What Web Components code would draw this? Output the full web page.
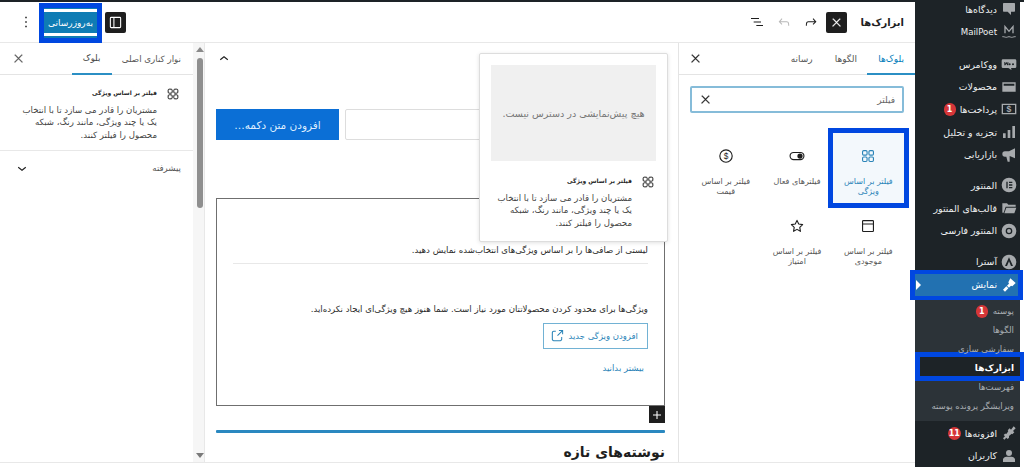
<!DOCTYPE html>
<html lang="fa" dir="rtl">
<head>
<meta charset="utf-8">
<title>ابزارک‌ها</title>
<style>
html, body { margin: 0; height: 100%; overflow: hidden; background: #fff; }
body { font-family: "DejaVu Sans", "Noto Sans", sans-serif; color: #1e1e1e; }
</style>
</head>
<body>
<wp-app>
  <wp-admin-menu slot="menu">
    <wp-menu-item icon="comment" style="--h:14px">دیدگاه‌ها</wp-menu-item>
    <wp-menu-item icon="mailpoet" style="--gap:5px;font-size:8.6px">MailPoet</wp-menu-item>
    <wp-menu-item icon="woo" style="--gap:9px">ووکامرس</wp-menu-item>
    <wp-menu-item icon="box">محصولات</wp-menu-item>
    <wp-menu-item icon="pay" badge="1">پرداخت‌ها</wp-menu-item>
    <wp-menu-item icon="bars">تجزیه و تحلیل</wp-menu-item>
    <wp-menu-item icon="mega">بازاریابی</wp-menu-item>
    <wp-menu-item icon="elementor" style="--gap:8px">المنتور</wp-menu-item>
    <wp-menu-item icon="folder">قالب‌های المنتور</wp-menu-item>
    <wp-menu-item icon="disc">المنتور فارسی</wp-menu-item>
    <wp-menu-item icon="astra" style="--gap:8px">آسترا</wp-menu-item>
    <wp-menu-item icon="brush" current>نمایش</wp-menu-item>
    <wp-submenu>
      <wp-submenu-item badge="1">پوسته</wp-submenu-item>
      <wp-submenu-item>الگوها</wp-submenu-item>
      <wp-submenu-item>سفارشی سازی</wp-submenu-item>
      <wp-submenu-item current>ابزارک‌ها</wp-submenu-item>
      <wp-submenu-item>فهرست‌ها</wp-submenu-item>
      <wp-submenu-item>ویرایشگر پرونده پوسته</wp-submenu-item>
    </wp-submenu>
    <wp-menu-item icon="plug" badge="11" style="--gap:1px">افزونه‌ها</wp-menu-item>
    <wp-menu-item icon="user">کاربران</wp-menu-item>
  </wp-admin-menu>

  <wp-editor-header slot="header">ابزارک‌ها</wp-editor-header>

  <wp-inserter slot="inserter">
    <wp-block-tile icon="grid" selected>فیلتر بر اساس ویژگی</wp-block-tile>
    <wp-block-tile icon="toggle">فیلترهای فعال</wp-block-tile>
    <wp-block-tile icon="dollar">فیلتر بر اساس قیمت</wp-block-tile>
    <wp-block-tile icon="archive">فیلتر بر اساس موجودی</wp-block-tile>
    <wp-block-tile icon="star">فیلتر بر اساس امتیاز</wp-block-tile>
  </wp-inserter>

  <wp-canvas slot="canvas"></wp-canvas>

  <wp-scrollbar slot="scrollbar"></wp-scrollbar>

  <wp-settings slot="settings"></wp-settings>
</wp-app>

<script>
const ICONS = {
  close: `<path fill="currentColor" stroke="currentColor" stroke-width=".8" d="M13 11.8l6.1-6.3-1-1-6.1 6.2-6.1-6.2-1 1 6.1 6.3-6.5 6.7 1 1 6.5-6.6 6.5 6.6 1-1z"/>`,
  redo: `<path fill="currentColor" d="M15.6 6.5l-1.1 1 2.9 3.3H8c-.9 0-1.7.3-2.3.9-1.4 1.5-1.4 4.2-1.4 5.6v.2h1.5v-.3c0-1.1 0-3.5 1-4.5.3-.3.7-.5 1.3-.5h9.2L14.5 15l1.1 1.1 4.6-4.6-4.6-5z"/>`,
  undo: `<path fill="currentColor" d="M18.3 11.7c-.6-.6-1.4-.9-2.3-.9H6.7l2.9-3.3-1.1-1-4.5 5L8.5 16l1-1-2.7-2.7H16c.5 0 .9.2 1.3.5 1 1 1 3.4 1 4.5v.3h1.5v-.2c0-1.5 0-4.3-1.5-5.7z"/>`,
  list: `<path fill="currentColor" d="M3 6h12v1.5H3zM7 11.25h11v1.5H7zM11 16.5h10V18H11z"/>`,
  panel: `<path fill="currentColor" d="M18 4H6a2 2 0 0 0-2 2v12a2 2 0 0 0 2 2h12a2 2 0 0 0 2-2V6a2 2 0 0 0-2-2zM5.5 18V6c0-.3.2-.5.5-.5h3v13H6a.5.5 0 0 1-.5-.5zm13 0c0 .3-.2.5-.5.5h-7.500v-13H18c.3 0 .5.2.5.5z"/>`,
  kebab: `<path fill="currentColor" d="M13 19h-2v-2h2zm0-6h-2v-2h2zm0-6h-2V5h2z"/>`,
  up: `<path fill="currentColor" d="M6.500 12.400L12 8l5.500 4.400-.9 1.200L12 10l-4.500 3.600-1-1.200z"/>`,
  down: `<path fill="currentColor" d="M17.500 11.600L12 16l-5.500-4.400.9-1.200L12 14l4.500-3.600 1 1.200z"/>`,
  plus: `<path fill="currentColor" d="M18 11.200h-5.200V6h-1.600v5.200H6v1.600h5.200V18h1.600v-5.200H18z"/>`,
  grid: `<g fill="none" stroke="currentColor" stroke-width="1.500"><rect x="4.750" y="4.750" width="6" height="6" rx="1.500"/><rect x="13.250" y="4.750" width="6" height="6" rx="1.500"/><rect x="4.750" y="13.250" width="6" height="6" rx="1.500"/><rect x="13.250" y="13.250" width="6" height="6" rx="1.500"/></g>`,
  toggle: `<rect x="2.750" y="7.250" width="18.500" height="9.500" rx="4.750" fill="none" stroke="currentColor" stroke-width="1.500"/><circle cx="16" cy="12" r="3.500" fill="currentColor"/>`,
  dollar: `<circle cx="12" cy="12" r="8.250" fill="none" stroke="currentColor" stroke-width="1.500"/><text x="12" y="16" text-anchor="middle" font-size="11" font-family="Liberation Sans" fill="currentColor" direction="ltr">$</text>`,
  archive: `<path fill="none" stroke="currentColor" stroke-width="1.500" d="M5.750 4.750h12.500c.6 0 1 .4 1 1v12.500c0 .6-.4 1-1 1H5.750c-.6 0-1-.4-1-1V5.750c0-.6.4-1 1-1zM4.750 9.250h14.500"/>`,
  star: `<path fill="none" stroke="currentColor" stroke-width="1.500" stroke-linejoin="round" d="M12 4.500l2.300 4.900 5.200.7-3.800 3.700.9 5.300-4.600-2.600-4.600 2.600.9-5.300-3.800-3.700 5.200-.7z"/>`,
  external: `<path fill="currentColor" d="M18.200 17c0 .7-.6 1.200-1.200 1.200H7c-.7 0-1.200-.6-1.200-1.200V7c0-.7.6-1.200 1.200-1.200h3.200V4.200H7C5.500 4.200 4.200 5.500 4.200 7v10c0 1.500 1.200 2.800 2.800 2.800h10c1.500 0 2.800-1.200 2.800-2.800v-3.600h-1.500V17zM14.900 3v1.500h3.700l-6.400 6.400 1.100 1.100 6.400-6.400v3.700h1.500V3h-6.300z"/>`,
  comment: `<path fill="currentColor" d="M4 3h16a1 1 0 0 1 1 1v11a1 1 0 0 1-1 1h-5v5l-5-5H4a1 1 0 0 1-1-1V4a1 1 0 0 1 1-1z"/>`,
  mailpoet: `<path fill="none" stroke="currentColor" stroke-width="2" d="M6 14V4l6 7 6-7v10"/><path fill="none" stroke="currentColor" stroke-width="1.500" d="M2 19c4 0 4 1 6 1 1.500 0 2.500-1 4-1s2.500 1 4 1c2 0 2-1 6-1"/>`,
  woo: `<path fill="currentColor" fill-rule="evenodd" d="M3 5h18a2 2 0 0 1 2 2v9a2 2 0 0 1-2 2h-6l1 3-5-3H3a2 2 0 0 1-2-2V7a2 2 0 0 1 2-2zm2 4v5h1.500L8 11.500 9.500 14H11V9H9.800v2.500L8.500 9.500h-1L6.200 11.500V9zm8 2a1.500 1.500 0 1 0 0 3 1.500 1.500 0 0 0 0-3zm5 0a1.500 1.500 0 1 0 0 3 1.500 1.500 0 0 0 0-3z"/>`,
  box: `<path fill="currentColor" d="M2 5h20v14H2zM4 7v3h16V7z" fill-rule="evenodd"/>`,
  pay: `<path fill="none" stroke="currentColor" stroke-width="2" d="M2 5h20v14H2z"/><text x="12" y="17" text-anchor="middle" font-size="13" font-weight="700" font-family="Liberation Sans" fill="currentColor" direction="ltr">$</text>`,
  bars: `<path fill="currentColor" d="M3 14h4v7H3zM10 9h4v12h-4zM17 3h4v18h-4z"/>`,
  mega: `<path fill="currentColor" d="M21 2v15l-8-3.500V22h-3l-2-7.500H6a4 4 0 0 1 0-8h6z"/>`,
  elementor: `<path fill="currentColor" fill-rule="evenodd" d="M12 1a11 11 0 1 1 0 22 11 11 0 0 1 0-22zM8 7v10h2V7zm4 0v2h5V7zm0 4v2h5v-2zm0 4v2h5v-2z"/>`,
  folder: `<path fill="currentColor" d="M2 5h7l2 2h11v3H7l-3 9H2zM8 11.500h15L20 20H5z"/>`,
  disc: `<path fill="currentColor" fill-rule="evenodd" d="M12 1a11 11 0 1 1 0 22 11 11 0 0 1 0-22zm0 6a5 5 0 1 0 0 10 5 5 0 0 0 0-10z"/><circle cx="12" cy="12" r="3" fill="currentColor"/>`,
  astra: `<path fill="currentColor" fill-rule="evenodd" d="M12 1a11 11 0 1 1 0 22 11 11 0 0 1 0-22zm0 4L6 18h3l3-7 3 7h3z"/>`,
  brush: `<path fill="currentColor" d="M14 2l8 7-5 5-2-1-2 2-1 1-3-3 1-1 2-2-1-2zM8 14l3 3-5 5-3-3z"/>`,
  plug: `<path fill="currentColor" d="M19 2l3 3-4 4 2 2-3 3-1-1-4 3.500V19l-2 2-2-2-3 3-2-2 3-3-2-2 2-2h2.500L11 9l-1-1 3-3 2 2z"/>`,
  user: `<path fill="currentColor" d="M12 3a4.500 4.500 0 1 1 0 9 4.500 4.500 0 0 1 0-9zM3 21v-4c0-2 3-4 5-4h8c2 0 5 2 5 4v4z"/>`,
};

function icon(name, size = 24) {
  return `<svg aria-hidden="true" width="${size}" height="${size}" viewBox="0 0 24 24">${ICONS[name]}</svg>`;
}

class WpApp extends HTMLElement {
  constructor() {
    super();
    this.attachShadow({ mode: "open" }).innerHTML = `
<style>
:host {
  display: flex;
  block-size: 467px;
  box-sizing: border-box;
  border-top: 2px solid #1d2327;
  padding-right: 4px;
  overflow: hidden;
}
.editor { flex: 1; min-width: 0; display: flex; flex-direction: column; }
.panels { flex: 1; min-height: 0; display: flex; }
.foot { height: 4px; border-top: 1px solid #e8e8e8; background: #fff; position: relative; }
::slotted([slot="menu"]) { flex: none; width: 105px; }
</style>
<slot name="menu"></slot>
<div class="editor">
  <slot name="header"></slot>
  <div class="panels">
    <slot name="inserter"></slot>
    <slot name="canvas"></slot>
    <slot name="scrollbar"></slot>
    <slot name="settings"></slot>
  </div>
  <div class="foot"></div>
</div>`;
  }
}

class WpAdminMenu extends HTMLElement {
  constructor() {
    super();
    this.attachShadow({ mode: "open" }).innerHTML = `
<style>
:host { display: block; background: #1d2327; position: relative; z-index: 2; }
</style>
<slot></slot>`;
  }
}

function badgeHtml(el) {
  return el.hasAttribute("badge") ? `<span class="badge">${el.getAttribute("badge")}</span>` : "";
}

class WpMenuItem extends HTMLElement {
  connectedCallback() {
    if (this.shadowRoot) return;
    this.attachShadow({ mode: "open" }).innerHTML = `
<style>
:host {
  display: flex;
  align-items: center;
  height: var(--h, 22.700px);
  margin-top: var(--gap, 0);
  color: #eef0f1;
  font-size: 9.400px;
  position: relative;
  white-space: nowrap;
}
.ic { flex: none; width: 22px; display: flex; justify-content: center; color: #a7aaad; }
.lbl { padding-right: 1px; }
.badge {
  margin-right: 4px;
  min-width: 12px;
  height: 13px;
  padding: 0 1px;
  box-sizing: border-box;
  border-radius: 7px;
  background: #d63638;
  color: #fff;
  font: 700 8px/13px "DejaVu Sans", sans-serif;
  text-align: center;
}
:host([current]) { background: #2271b1; color: #fff; height: 22px; margin: 1px 0 1px; }
:host([current]) .ic { color: #fff; }
:host([current])::before {
  content: "";
  position: absolute;
  inset: -4px -3px -4px -5px;
  border: solid #0047e0;
  border-width: 4px 5px;
}
:host([current])::after {
  content: "";
  position: absolute;
  left: 1px;
  top: 6px;
  border: 5px solid transparent;
  border-left: 5px solid #fff;
}
</style>
<span class="ic">${icon(this.getAttribute("icon"), 16)}</span>
<span class="lbl"><slot></slot></span>${badgeHtml(this)}`;
  }
}

class WpSubmenu extends HTMLElement {
  constructor() {
    super();
    this.attachShadow({ mode: "open" }).innerHTML = `
<style>
:host { display: block; background: #2c3338; padding: 5px 0; }
</style>
<slot></slot>`;
  }
}

class WpSubmenuItem extends HTMLElement {
  connectedCallback() {
    if (this.shadowRoot) return;
    this.attachShadow({ mode: "open" }).innerHTML = `
<style>
:host {
  display: flex;
  align-items: center;
  height: 19px;
  padding-right: 6px;
  color: #a9aeb3;
  font-size: 8.600px;
  position: relative;
  white-space: nowrap;
}
.lbl { position: relative; z-index: 1; }
.badge {
  margin-right: 5px;
  width: 12px;
  height: 13px;
  border-radius: 7px;
  background: #d63638;
  color: #fff;
  font: 700 8px/13px "DejaVu Sans", sans-serif;
  text-align: center;
}
:host([current]) { color: #fff; font-weight: 700; font-size: 9px; }
:host([current])::before {
  content: "";
  position: absolute;
  inset: -7px -5px -3px 0;
  background: #1d2327;
  border: 5px solid #0047e0;
}
</style>
<span class="lbl"><slot></slot></span>${badgeHtml(this)}`;
  }
}

class WpEditorHeader extends HTMLElement {
  constructor() {
    super();
    this.attachShadow({ mode: "open" }).innerHTML = `
<style>
:host {
  display: flex;
  align-items: center;
  flex: none;
  height: 40px;
  border-bottom: 1px solid #e8e8e8;
  padding-right: 11px;
  position: relative;
}
.title { font-size: 10px; font-weight: 700; margin-left: 13px; }
.black {
  width: 21px;
  height: 21px;
  border-radius: 2px;
  background: #1e1e1e;
  color: #fff;
  display: flex;
  align-items: center;
  justify-content: center;
}
.tools { display: flex; align-items: center; gap: 11px; margin-right: 7px; }
.tools span { display: flex; }
.muted { color: #b8b8b8; }
.end { margin-right: auto; display: flex; align-items: center; }
.save {
  box-sizing: border-box;
  width: 63px;
  height: 40px;
  margin: 1px 3px 0 0;
  border: 5px solid #0047e0;
  background: #0f7cb4;
  display: flex;
  align-items: center;
  justify-content: center;
  color: #fff;
  font-size: 9px;
  white-space: nowrap;
  position: relative;
}
.save::before {
  content: "";
  position: absolute;
  left: 0;
  right: 0;
  top: 1px;
  height: 21px;
  border: solid #fff;
  border-width: 3px 0;
}
.kebab { display: flex; margin: 0 4px 0 17px; color: #1e1e1e; }
</style>
<span class="title"><slot></slot></span>
<span class="black">${icon("close", 13)}</span>
<span class="tools">
  <span>${icon("redo", 16)}</span>
  <span class="muted">${icon("undo", 16)}</span>
  <span>${icon("list", 16)}</span>
</span>
<span class="end">
  <span class="black">${icon("panel", 17)}</span>
  <span class="save">به‌روزرسانی</span>
  <span class="kebab">${icon("kebab", 18)}</span>
</span>`;
  }
}

class WpInserter extends HTMLElement {
  constructor() {
    super();
    this.attachShadow({ mode: "open" }).innerHTML = `
<style>
:host {
  display: flex;
  flex-direction: column;
  flex: none;
  width: 236px;
  border-left: 1px solid #e4e4e4;
}
.tabs {
  display: flex;
  align-items: center;
  height: 31px;
  border-bottom: 1px solid #e4e4e4;
  font-size: 9px;
  color: #555;
  flex: none;
}
.tab { display: flex; align-items: center; box-sizing: border-box; height: 31px; }
.tab.on { color: #007cba; border-bottom: 2px solid #2b8fc4; width: 48px; padding: 2px 11px 0 0; margin-bottom: -1px; height: 32px; }
.tab.two { margin-right: 10px; }
.tab.three { margin-right: 22px; }
.x { margin-right: auto; margin-left: 10px; display: flex; color: #1e1e1e; }
.search {
  margin: 11px 11px 0;
  height: 27px;
  box-sizing: border-box;
  border: 2px solid #86bcd9;
  border-radius: 2px;
  display: flex;
  align-items: center;
  padding: 0 7px;
  font-size: 9px;
  color: #666;
  flex: none;
}
.search .x { margin-left: 0; }
.grid {
  display: grid;
  grid-template-columns: repeat(3, 71.300px);
  grid-auto-rows: 70px;
  padding: 20px 11px 0;
}
</style>
<div class="tabs">
  <span class="tab on">بلوک‌ها</span>
  <span class="tab two">الگوها</span>
  <span class="tab three">رسانه</span>
  <span class="x">${icon("close", 13)}</span>
</div>
<div class="search"><span>فیلتر</span><span class="x">${icon("close", 13)}</span></div>
<div class="grid"><slot></slot></div>`;
  }
}

class WpBlockTile extends HTMLElement {
  connectedCallback() {
    if (this.shadowRoot) return;
    this.attachShadow({ mode: "open" }).innerHTML = `
<style>
:host {
  display: flex;
  flex-direction: column;
  align-items: center;
  padding: 14px 9px 0;
  box-sizing: border-box;
  color: #1e1e1e;
  font-size: 8px;
  line-height: 10px;
  text-align: center;
}
.ic { display: flex; margin-bottom: 12px; }
.lbl { color: #555; }
:host([selected]) { background: #f3f8fc; outline: 5px solid #0047e0; color: #2b84b8; }
:host([selected]) .lbl { color: #2b84b8; }
</style>
<span class="ic">${icon(this.getAttribute("icon"), 18)}</span>
<span class="lbl"><slot></slot></span>`;
  }
}

class WpBlockCard extends HTMLElement {
  constructor() {
    super();
    this.attachShadow({ mode: "open" }).innerHTML = `
<style>
:host { display: flex; gap: 8px; color: #1e1e1e; }
.ic { flex: none; display: flex; width: 16px; justify-content: center; }
.title { font-size: 6px; font-weight: 700; line-height: 14px; }
.desc { font-size: 8.600px; line-height: 12.300px; color: #444; margin-top: 4px; width: 138px; }
</style>
<span class="ic">${icon("grid", 16)}</span>
<div>
  <div class="title">فیلتر بر اساس ویژگی</div>
  <div class="desc">مشتریان را قادر می سازد تا با انتخاب یک یا چند ویژگی، مانند رنگ، شبکه محصول را فیلتر کنند.</div>
</div>`;
  }
}

class WpCanvas extends HTMLElement {
  constructor() {
    super();
    this.attachShadow({ mode: "open" }).innerHTML = `
<style>
:host {
  display: block;
  flex: none;
  width: 474px;
  box-sizing: border-box;
  padding: 0 13px 0 11px;
  position: relative;
  border-left: 1px solid #e8e8e8;
  overflow: hidden;
  color: #1e1e1e;
}
.top { height: 32px; display: flex; justify-content: flex-end; align-items: center; }
.top span { display: flex; margin-left: -1px; }
.search { display: flex; gap: 6px; margin-top: 34px; height: 31px; }
.field { flex: 1; border: 1px solid #ddd; border-radius: 2px; }
.btn {
  width: 123px;
  background: #0b6fd6;
  color: #dfeeff;
  font-size: 10.500px;
  display: flex;
  align-items: center;
  justify-content: center;
}
.box {
  margin-top: 58px;
  height: 208px;
  box-sizing: border-box;
  border: 1px solid #6f6f6f;
  padding: 44px 16px 0;
  position: relative;
  font-size: 8.600px;
  color: #2b2b2b;
}
.line { line-height: 14px; white-space: nowrap; }
hr { border: 0; border-top: 1px solid #e8e8e8; margin: 6px 0 0; }
.msg { margin-top: 38px; }
.add {
  margin-top: 7px;
  width: 105px;
  height: 26px;
  box-sizing: border-box;
  border: 1px solid #72b2d4;
  color: #2b84b8;
  font-size: 8.500px;
  display: flex;
  align-items: center;
  gap: 4px;
  padding: 0 9px 0 0;
  white-space: nowrap;
}
.add span { display: flex; }
.more { margin: 12px 4px 0 0; color: #2b84b8; font-size: 8.600px; line-height: 14px; }
.plus {
  position: absolute;
  left: 432px;
  top: 207px;
  width: 16px;
  height: 17px;
  background: #1e1e1e;
  color: #fff;
  display: flex;
  align-items: center;
  justify-content: center;
}
.rule { margin-top: 24px; height: 3px; background: #2a88c0; border-radius: 1px; }
h2 { margin: 7px 0 0; font-size: 14px; line-height: 24px; font-weight: 700; white-space: nowrap; }
.pop {
  position: absolute;
  left: 274px;
  top: 10px;
  width: 189px;
  height: 189px;
  box-sizing: border-box;
  background: #fff;
  border: 1px solid #ddd;
  border-radius: 2px;
  box-shadow: 0 1px 4px rgba(0, 0, 0, .12);
  padding: 11px;
}
.preview {
  height: 96px;
  background: #f0f0f0;
  display: flex;
  align-items: center;
  justify-content: center;
  font-size: 9.600px;
  color: #777;
}
.pop wp-block-card { margin-top: 13px; }
</style>
<div class="top"><span>${icon("up", 18)}</span></div>
<div class="search">
  <div class="field"></div>
  <div class="btn">افزودن متن دکمه…</div>
</div>
<div class="box">
  <div class="line">لیستی از صافی‌ها را بر اساس ویژگی‌های انتخاب‌شده نمایش دهید.</div>
  <hr>
  <div class="line msg">ویژگی‌ها برای محدود کردن محصولاتتان مورد نیاز است. شما هنوز هیچ ویژگی‌ای ایجاد نکرده‌اید.</div>
  <div class="add">افزودن ویژگی جدید <span>${icon("external", 16)}</span></div>
  <div class="more">بیشتر بدانید</div>
  <div class="plus">${icon("plus", 16)}</div>
</div>
<div class="rule"></div>
<h2>نوشته‌های تازه</h2>
<div class="pop">
  <div class="preview">هیچ پیش‌نمایشی در دسترس نیست.</div>
  <wp-block-card></wp-block-card>
</div>`;
  }
}

class WpScrollbar extends HTMLElement {
  constructor() {
    super();
    this.attachShadow({ mode: "open" }).innerHTML = `
<style>
:host {
  display: flex;
  flex-direction: column;
  align-items: center;
  flex: none;
  width: 11px;
  background: #f6f6f6;
  padding: 4px 0 0 3px;
  box-sizing: border-box;
  height: 100%;
}
.arrow { width: 0; height: 0; border: 4px solid transparent; border-top: 0; border-bottom: 5px solid #8a8a8a; flex: none; }
.arrow.dn { border-bottom: 0; border-top: 5px solid #7a7a7a; margin-top: auto; margin-bottom: 4px; }
.thumb { width: 6px; height: 150px; margin-top: 6px; border-radius: 3px; background: #8f8f8f; flex: none; }
</style>
<div class="arrow"></div>
<div class="thumb"></div>
<div class="arrow dn"></div>`;
  }
}

class WpSettings extends HTMLElement {
  constructor() {
    super();
    this.attachShadow({ mode: "open" }).innerHTML = `
<style>
:host { display: block; flex: 1; min-width: 0; color: #1e1e1e; }
.tabs { height: 31px; display: flex; align-items: center; border-bottom: 1px solid #e4e4e4; font-size: 8.700px; color: #555; padding-right: 12px; white-space: nowrap; }
.tab.on { color: #444; width: 40px; height: 32px; box-sizing: border-box; border-bottom: 2px solid #2b8fc4; margin: 0 10px -1px 0; display: flex; align-items: center; justify-content: center; }
.x { margin-right: auto; margin-left: 12px; display: flex; }
.card { box-sizing: border-box; height: 76px; padding: 11px 12px 0 0; border-bottom: 1px solid #e8e8e8; }
.more { display: flex; align-items: center; height: 34px; padding: 0 12px; font-size: 8.600px; color: #555; }
.more span { margin-right: auto; margin-left: 1px; display: flex; color: #1e1e1e; }
</style>
<div class="tabs">
  <span class="tab">نوار کناری اصلی</span>
  <span class="tab on">بلوک</span>
  <span class="x">${icon("close", 13)}</span>
</div>
<div class="card"><wp-block-card></wp-block-card></div>
<div class="more">پیشرفته<span>${icon("down", 18)}</span></div>`;
  }
}

customElements.define("wp-block-card", WpBlockCard);
customElements.define("wp-block-tile", WpBlockTile);
customElements.define("wp-menu-item", WpMenuItem);
customElements.define("wp-submenu-item", WpSubmenuItem);
customElements.define("wp-submenu", WpSubmenu);
customElements.define("wp-admin-menu", WpAdminMenu);
customElements.define("wp-editor-header", WpEditorHeader);
customElements.define("wp-inserter", WpInserter);
customElements.define("wp-canvas", WpCanvas);
customElements.define("wp-scrollbar", WpScrollbar);
customElements.define("wp-settings", WpSettings);
customElements.define("wp-app", WpApp);
</script>
</body>
</html>
